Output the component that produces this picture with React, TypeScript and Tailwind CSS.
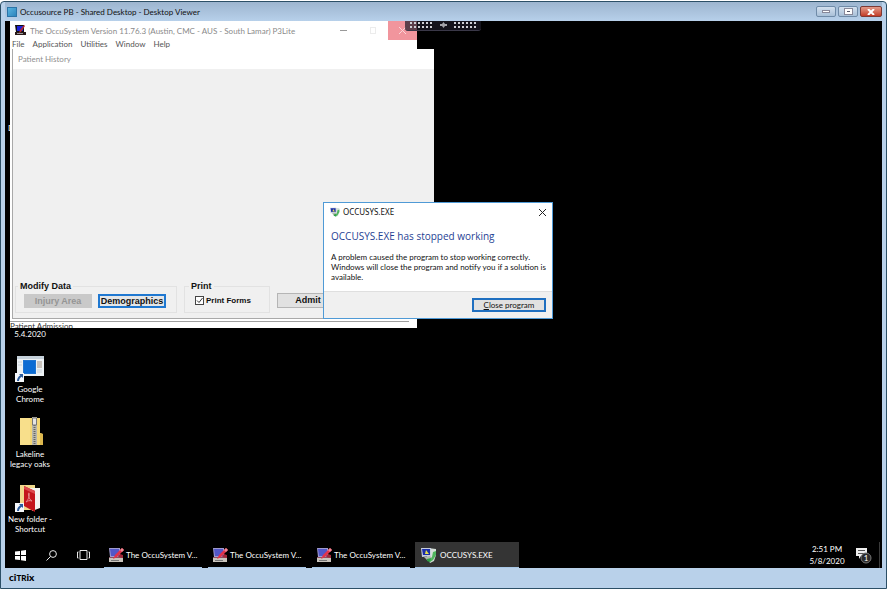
import { useId, type ReactNode } from "react";

function OccuIcon({ className }: { className: string }) {
  return (
    <svg viewBox="0 0 16 16" className={className} aria-hidden="true">
      <path d="M1 1h11v9H2z" fill="#9f9ad0" />
      <path d="M2 2h9v7H3z" fill="#5257c8" />
      <path d="M1 10h14v2H1z" fill="#8c5060" />
      <path d="M1 11h14v4H1z" fill="#c9c4bc" />
      <path d="M3 13h8v1H3z" fill="#777" />
      <path d="M14 1l2 2-7 7-4 2 2-4z" fill="#e2334a" />
      <path d="M14 1l2 2-2 2-2-2z" fill="#f08a95" />
      <path d="M12 7l3 1v3l-5-1z" fill="#a02838" />
    </svg>
  );
}

function DarkOccuIcon({ className }: { className: string }) {
  return (
    <svg viewBox="0 0 11 11" className={className} aria-hidden="true">
      <path d="M0 0h9v7H1z" fill="#111" />
      <path d="M2 1h6v5H2z" fill="#1c22d8" />
      <path d="M0 7h11v3H0z" fill="#2a1a1a" />
      <path d="M2 8h6v1H2z" fill="#999" />
      <path d="M9 0l1 1-4 6-2 1 1-3z" fill="#b62a35" />
    </svg>
  );
}

function CrashIcon({ className }: { className: string }) {
  return (
    <svg viewBox="0 0 16 16" className={className} aria-hidden="true">
      <path d="M7 1l8 1v6l-2 6-4 2-3-6z" fill="#d5dfd8" />
      <path d="M12 5l3-1v4l-3 5-3 2-2-2 4-3z" fill="#4fb55d" />
      <path d="M0 1h10v8l-9 1z" fill="#c8cfe0" />
      <path d="M1 2h8v6H2z" fill="#1c2fa8" />
      <path d="M5 3l3 4H4z" fill="#e8e24a" />
      <path d="M3 10l6-1 2 2-5 2z" fill="#aeb9ae" />
      <path d="M6 12l4-1-1 4-3-1z" fill="#2f9f45" />
    </svg>
  );
}

function ShortcutArrow() {
  return (
    <svg viewBox="0 0 9 9" className="absolute bottom-[2px] left-[10px] h-[9px] w-[9px]" aria-hidden="true">
      <path d="M0 0h9v9H0z" fill="#f4f7fb" />
      <path d="M4 1h4v4L6.700 3.700C5 4.800 4.200 6 4 8H2C2 5.500 3.300 3.600 5.300 2.300z" fill="#2a5b9c" />
    </svg>
  );
}

function DesktopItem({ lines, shortcut, children }: { lines: string[]; shortcut?: boolean; children: ReactNode }) {
  return (
    <li className="h-[65px]">
      <a href="#open" className="relative flex flex-col items-center text-center">
        <span className="relative block h-[32px] w-[50px]">
          {children}
          {shortcut && <ShortcutArrow />}
        </span>
        {lines.map((line) => (
          <span key={line} className="block whitespace-nowrap leading-[10px]">{line}</span>
        ))}
      </a>
    </li>
  );
}

function Group({ title, className, children }: { title: string; className: string; children: ReactNode }) {
  return (
    <fieldset className={`flex h-[32px] items-center border border-[#e2e2e2] ${className}`}>
      <legend className="px-[2px] leading-[10px]">{title}</legend>
      {children}
    </fieldset>
  );
}

function HistoryWindow() {
  const printId = useId();
  return (
    <section className="absolute left-[2px] top-[28px] flex h-[270px] w-[422px] flex-col border-b border-l border-[#a9a9a9] bg-[#f0f0f0]">
      <h2 className="h-[20px] bg-white pl-[5px] leading-[20px] text-[#8f8f8f]">Patient History</h2>
      <form className="mt-auto flex items-end pb-[5px] pl-[2px] font-['Liberation_Sans',sans-serif] text-[9px] font-bold text-[#111]">
        <Group title="Modify Data" className="w-[162px] gap-[6px] pl-[2px]">
          <button type="button" disabled className="mb-[2px] ml-[6px] h-[14px] w-[68px] bg-[#c9c9c9] leading-[14px] text-[#959595]">Injury Area</button>
          <button type="button" className="mb-[2px] h-[14px] w-[68px] border-2 border-[#1f78d1] bg-[#e4e6e8] leading-[10px]">Demographics</button>
        </Group>
        <Group title="Print" className="ml-[7px] w-[86px] pl-[4px]">
          <input id={printId} type="checkbox" defaultChecked className="peer mb-[2px] ml-[6px] h-[9px] w-[9px] appearance-none border border-[#444] bg-white" />
          <svg viewBox="0 0 9 9" className="mb-[2px] -ml-[9px] hidden h-[9px] w-[9px] peer-checked:block" aria-hidden="true">
            <path d="M2 4.500L4 6.500L7.500 2" fill="none" stroke="#333" strokeWidth="1" />
          </svg>
          <label htmlFor={printId} className="mb-[2px] ml-[2px] whitespace-nowrap text-[8px]">Print Forms</label>
        </Group>
        <button type="button" className="mb-[5px] ml-[7px] h-[15px] w-[62px] border border-[#b5b5b5] bg-[#e1e1e1] leading-[13px]">Admit</button>
      </form>
    </section>
  );
}

function MainWindow() {
  return (
    <section className="absolute left-[5px] top-0 h-[307px] w-[407px] bg-white text-[#555]">
      <header className="flex h-[18px] items-start">
        <DarkOccuIcon className="ml-[5px] mt-[4px] h-[11px] w-[11px]" />
        <h1 className="ml-[4px] leading-[20px] text-[#8a8a8a]">The OccuSystem Version 11.76.3 (Austin, CMC - AUS - South Lamar) P3Lite</h1>
        <div className="ml-auto flex">
          <button type="button" aria-label="Minimize" className="flex h-[19px] w-[29px] items-center justify-center">
            <span className="h-px w-[7px] bg-[#999]" />
          </button>
          <button type="button" aria-label="Maximize" className="flex h-[19px] w-[30px] items-center justify-center">
            <span className="h-[7px] w-[6px] border border-[#ececec]" />
          </button>
          <button type="button" aria-label="Close" className="flex h-[19px] w-[29px] items-center justify-center bg-[#f1959d]">
            <svg viewBox="0 0 7 7" className="h-[7px] w-[7px]" aria-hidden="true"><path d="M0 0l7 7M7 0L0 7" stroke="#fbd5d8" /></svg>
          </button>
        </div>
      </header>
      <nav className="flex gap-[8px] pl-[2px] leading-[10px]">
        {["File", "Application", "Utilities", "Window", "Help"].map((item) => (
          <button key={item} type="button">{item}</button>
        ))}
      </nav>
      <HistoryWindow />
      <div className="absolute inset-x-0 bottom-0 h-[7px] overflow-hidden leading-[8px] text-[#333]">
        <div className="mr-[8px] h-px bg-[#a0a0a0]" />
        <p>Patient Admission</p>
      </div>
    </section>
  );
}

function CrashDialog() {
  return (
    <section role="dialog" aria-label="OCCUSYS.EXE" className="absolute left-[318px] top-[181px] flex h-[117px] w-[230px] flex-col border border-[#4f9ad6] bg-white text-[#111]">
      <header className="flex h-[18px] items-center pl-[6px] pr-[6px]">
        <CrashIcon className="h-[10px] w-[10px]" />
        <h2 className="ml-[3px] font-['Noto_Sans',sans-serif]">OCCUSYS.EXE</h2>
        <button type="button" aria-label="Close" className="ml-auto">
          <svg viewBox="0 0 7 7" className="h-[7px] w-[7px]" aria-hidden="true"><path d="M0 0l7 7M7 0L0 7" stroke="#222" /></svg>
        </button>
      </header>
      <h3 className="mt-[8px] pl-[7px] font-['Open_Sans',sans-serif] text-[10px] leading-[14px] text-[#1f3f94]">OCCUSYS.EXE has stopped working</h3>
      <p className="mt-[9px] whitespace-nowrap pl-[7px] leading-[10px]">
        A problem caused the program to stop working correctly.<br />
        Windows will close the program and notify you if a solution is<br />
        available.
      </p>
      <footer className="mt-auto flex h-[27px] items-center justify-end border-t border-[#dfdfdf] bg-[#f0f0f0] pr-[6px]">
        <button type="button" className="h-[14px] w-[74px] border-2 border-[#1f6fc0] bg-[#e1e1e1] leading-[10px]"><span className="underline">C</span>lose program</button>
      </footer>
    </section>
  );
}

function DotGrid() {
  return (
    <svg viewBox="0 0 23 6" className="h-[6px] w-[23px]" aria-hidden="true">
      {[0, 4, 8, 12, 16, 20].map((x) => (
        <path key={x} d={`M${x} 0h2v2h-2zM${x} 4h2v2h-2z`} fill="#cfcfd4" />
      ))}
    </svg>
  );
}

function ViewerToolbar() {
  return (
    <button type="button" aria-label="Viewer toolbar" className="absolute left-[400px] top-0 flex h-[10px] w-[76px] items-start justify-center gap-[7px] rounded-b-[3px] border-b border-[#3a3848] bg-[#1d1b26]/70 pt-px">
      <DotGrid />
      <svg viewBox="0 0 7 6" className="h-[6px] w-[7px]" aria-hidden="true"><path d="M3.500 0L5 2h2v2H5L3.500 6 2 4H0V2h2z" fill="#a3a3a8" /></svg>
      <DotGrid />
    </button>
  );
}

function Taskbar() {
  return (
    <footer className="flex h-[26px] shrink-0 items-stretch">
      <button type="button" aria-label="Start" className="flex w-[30px] items-center justify-center">
        <svg viewBox="0 0 11 11" className="h-[11px] w-[11px]" aria-hidden="true"><path d="M0 1.500L5 1v4H0zM6 .8L11 0v5H6zM0 6h5v4L0 9.500zM6 6h5v5L6 10.200z" fill="#fff" /></svg>
      </button>
      <button type="button" aria-label="Search" className="flex w-[33px] items-center justify-center">
        <svg viewBox="0 0 11 11" className="h-[11px] w-[11px]" aria-hidden="true"><circle cx="7" cy="4" r="3.400" fill="none" stroke="#e8e8e8" /><path d="M4.500 6.500L.5 10.500" stroke="#e8e8e8" /></svg>
      </button>
      <button type="button" aria-label="Task view" className="mr-[4px] flex w-[31px] items-center justify-center">
        <svg viewBox="0 0 13 10" className="h-[10px] w-[13px]" aria-hidden="true"><path d="M3 .5h7v9H3zM1.500 2H.5v6h1M11.500 2h1v6h-1" fill="none" stroke="#e8e8e8" /></svg>
      </button>
      {[1, 2, 3].map((n) => (
        <button key={n} type="button" className="flex w-[104px] flex-col pl-px">
          <span className="flex h-[25px] items-center whitespace-nowrap">
            <OccuIcon className="ml-[4px] mr-[2px] h-[16px] w-[16px]" />
            The OccuSystem V...
          </span>
          <span className="h-px w-[98px] bg-[#a8c8e8]" />
        </button>
      ))}
      <button type="button" className="flex w-[104px] items-center border-b border-[#a8c8e8] bg-[#343434] pl-[6px]">
        <CrashIcon className="mr-[3px] h-[16px] w-[16px]" />
        OCCUSYS.EXE
      </button>
      <div className="ml-auto flex items-center">
        <time className="w-[40px] text-center leading-[12px]">2:51 PM<br />5/8/2020</time>
        <button type="button" aria-label="Notifications" className="ml-[8px]">
          <svg viewBox="0 0 17 18" className="h-[18px] w-[17px]" aria-hidden="true">
            <path d="M1 2h11v8H6l-2 3v-3H1z" fill="#eee" />
            <path d="M3 4.500h7M3 7.500h7" stroke="#555" />
            <circle cx="11" cy="12" r="5" fill="#2b2b2b" stroke="#777" />
            <text x="11" y="15" textAnchor="middle" fontSize="8" fill="#fff">1</text>
          </svg>
        </button>
        <span className="ml-[7px] mr-[2px] h-[26px] w-px bg-[#3a3a3a]" />
      </div>
    </footer>
  );
}

function Desktop() {
  return (
    <main className="relative flex min-h-0 flex-1 flex-col overflow-hidden bg-black text-white">
      <ul className="min-h-0 w-[50px] flex-1">
        <li className="h-[308px] pl-[3px] pt-[102px] leading-[10px]">D</li>
        <li className="h-[23px] text-center leading-[10px]">5.4.2020</li>
        <DesktopItem lines={["Google", "Chrome"]} shortcut>
          <svg viewBox="0 0 27 20" className="absolute left-[12px] top-[4px] h-[20px] w-[27px]" aria-hidden="true">
            <path d="M0 0h27v20H0z" fill="#edf2f5" />
            <path d="M0 0h27v3H0z" fill="#c5d1da" />
            <path d="M6 4h13v14H6z" fill="#1f75d2" />
            <path d="M7 5h11v12H7z" fill="#0b6bd3" />
            <path d="M20 5h5v7h-5z" fill="#c9c3bd" />
            <path d="M1 6h4M1 9h4M20 14h5M20 16h5" stroke="#c9d2d9" />
          </svg>
        </DesktopItem>
        <DesktopItem lines={["Lakeline", "legacy oaks"]}>
          <svg viewBox="0 0 23 28" className="absolute left-[15px] top-0 h-[28px] w-[23px]" aria-hidden="true">
            <path d="M0 1h20v15l3 1v11H0z" fill="#f3d675" />
            <path d="M0 1h10v27H0z" fill="#f8df8b" />
            <path d="M20 16l3 1v11h-3z" fill="#dcb84f" />
            <path d="M12 0h5v28h-5z" fill="#b9b7ac" />
            <path d="M14.500 8v20" stroke="#666" strokeWidth="2" strokeDasharray="1 1" />
            <path d="M12.500 1h4v7h-4z" fill="#e4e4e4" stroke="#777" />
          </svg>
        </DesktopItem>
        <DesktopItem lines={["New folder -", "Shortcut"]} shortcut>
          <svg viewBox="0 0 21 28" className="absolute left-[15px] top-[2px] h-[28px] w-[21px]" aria-hidden="true">
            <path d="M0 1h15v25H0z" fill="#f1d98c" />
            <path d="M9 4h11v20l-8 3z" fill="#f4f4f1" />
            <path d="M4 2l11 5v21L4 22z" fill="#c4161c" />
            <path d="M4 2l11 5v3L4 5z" fill="#dd4a4d" />
            <path d="M6 18c3-3 4-8 3-9s-1 6 3 8c-3-1-4 0-6 1z" fill="none" stroke="#e58a8a" />
          </svg>
        </DesktopItem>
      </ul>
      <MainWindow />
      <CrashDialog />
      <ViewerToolbar />
      <Taskbar />
    </main>
  );
}

export default function App() {
  return (
    <div className="h-screen bg-white pb-[2px] pr-px pt-px font-['Lato','Noto_Sans',sans-serif] text-[8px]">
      <div className="flex h-full flex-col rounded-t-[4px] border border-[#2c4f66] bg-[#b9d1ea] px-[4px]">
        <header className="flex h-[19px] shrink-0 items-center bg-linear-to-b from-[#9db5cf] to-[#b7d0ea] text-[#111]">
          <span className="ml-[2px] h-[10px] w-[10px] border border-[#2b74a8] bg-linear-to-br from-[#58b4e0] to-[#2c85bd]" />
          <h1 className="ml-[3px]">Occusource PB - Shared Desktop - Desktop Viewer</h1>
          <div className="ml-auto flex gap-[2px]">
            <button type="button" aria-label="Minimize" className="flex h-[11px] w-[20px] items-center justify-center rounded-[2px] border border-[#6f8ba8] bg-linear-to-b from-[#d3e0ee] to-[#a9c0d8]">
              <span className="h-[3px] w-[8px] border border-[#889] bg-white" />
            </button>
            <button type="button" aria-label="Restore" className="flex h-[11px] w-[20px] items-center justify-center rounded-[2px] border border-[#6f8ba8] bg-linear-to-b from-[#d3e0ee] to-[#a9c0d8]">
              <span className="h-[5px] w-[7px] border-2 border-white bg-[#556] outline outline-[#889]" />
            </button>
            <button type="button" aria-label="Close" className="flex h-[11px] w-[22px] items-center justify-center rounded-[2px] border border-[#7d3a35] bg-linear-to-b from-[#e29a8a] to-[#c23a25]">
              <svg viewBox="0 0 8 6" className="h-[6px] w-[8px]" aria-hidden="true"><path d="M1 0l6 6M7 0L1 6" stroke="#fff" strokeWidth="2" /></svg>
            </button>
          </div>
        </header>
        <Desktop />
        <footer className="flex h-[20px] shrink-0 items-center pb-[2px] pl-[4px] text-[10px] font-black text-black">
          <span>ci<span className="text-[8px]">TR</span>ix</span>
        </footer>
      </div>
    </div>
  );
}
